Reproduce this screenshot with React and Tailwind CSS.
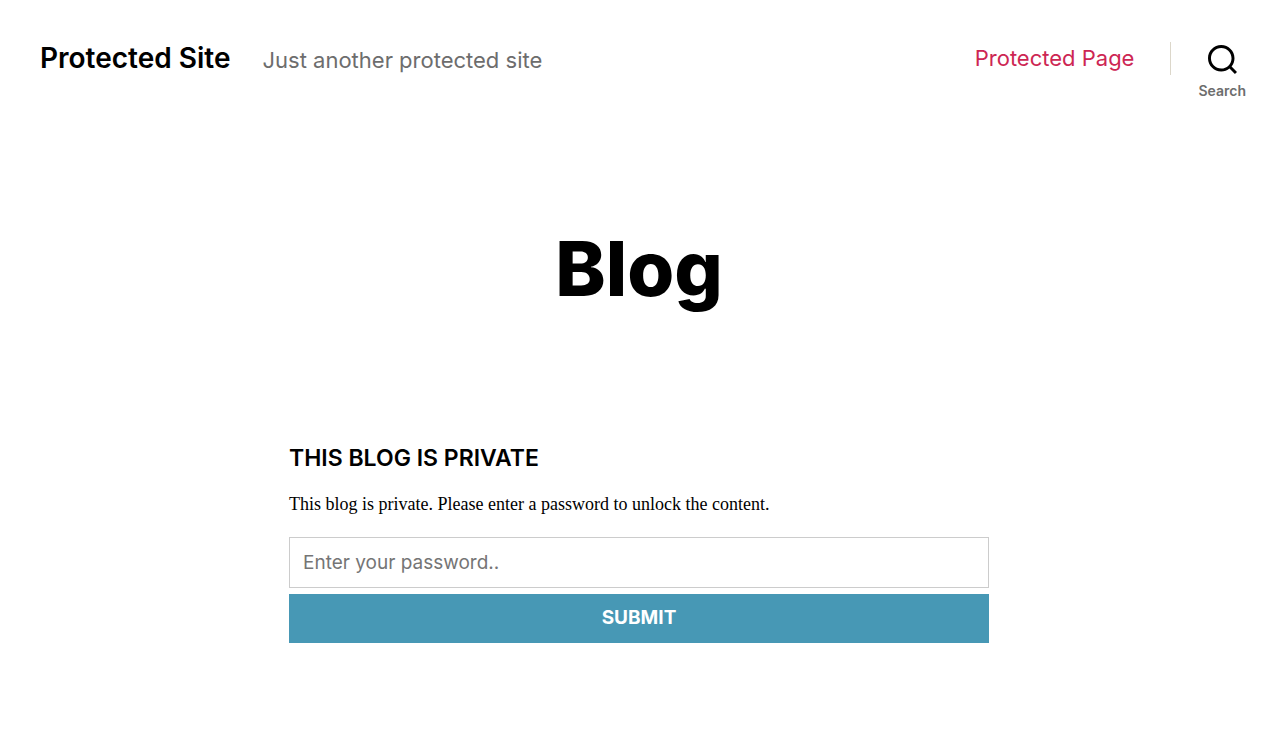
export default function App() {
  return (
    <div className="min-h-screen bg-white font-['Inter',sans-serif] text-black">
      <header className="flex items-start justify-between pt-10 pr-8 pl-10">
        <div className="flex items-baseline gap-x-8">
          <a href="#home" className="text-[28px] leading-9 font-semibold">
            Protected Site
          </a>
          <p className="text-[22px] leading-9 text-[#6d6d6d]">
            Just another protected site
          </p>
        </div>

        <div className="flex items-start">
          <nav aria-label="Main" className="flex">
            <a href="#protected" className="text-[22px] leading-9 text-[#cd2653]">
              Protected Page
            </a>
          </nav>
          <div className="mt-0.5 ml-9 h-[33px] border-l border-[#dcd7ca]" />
          <button type="button" className="mt-[5px] ml-[27px] flex flex-col items-center gap-[7px]">
            <svg viewBox="0 0 23 23" className="size-[29px]" fill="currentColor" aria-hidden="true">
              <path d="M38.710696,48.0601792 L43,52.3494831 L41.3494831,54 L37.0601792,49.710696 C35.2632422,51.1481185 32.9839107,52.0076499 30.5038249,52.0076499 C24.7027226,52.0076499 20,47.3049272 20,41.5038249 C20,35.7027226 24.7027226,31 30.5038249,31 C36.3049272,31 41.0076499,35.7027226 41.0076499,41.5038249 C41.0076499,43.9839107 40.1481185,46.2632422 38.710696,48.0601792 Z M36.3875844,47.1716785 C37.8030221,45.7026647 38.6734666,43.7048964 38.6734666,41.5038249 C38.6734666,36.9918565 35.0157934,33.3341833 30.5038249,33.3341833 C25.9918565,33.3341833 22.3341833,36.9918565 22.3341833,41.5038249 C22.3341833,46.0157934 25.9918565,49.6734666 30.5038249,49.6734666 C32.7048964,49.6734666 34.7026647,48.8030221 36.1716785,47.3875844 C36.2023931,47.347638 36.2360451,47.3092237 36.2726343,47.2726343 C36.3092237,47.2360451 36.347638,47.2023931 36.3875844,47.1716785 Z" transform="translate(-20 -31)" />
            </svg>
            <span className="text-sm leading-5 font-semibold text-[#6d6d6d]">Search</span>
          </button>
        </div>
      </header>

      <main>
        <h1 className="pt-[121px] text-center text-[76px] leading-[92px] font-extrabold">Blog</h1>

        <form className="mx-auto mt-32 w-full max-w-[700px]" onSubmit={(e) => e.preventDefault()}>
          <h2 className="text-[23px] leading-8 font-semibold uppercase">This blog is private</h2>
          <p className="mt-4 font-['Liberation_Serif',serif] text-lg leading-7">
            This blog is private. Please enter a password to unlock the content.
          </p>
          <input
            type="password"
            aria-label="Password"
            placeholder="Enter your password.."
            className="mt-[19px] block h-[51px] w-full border border-[#ccc] px-[13px] text-[19px] placeholder:text-[#757575]"
          />
          <button
            type="submit"
            className="mt-1.5 h-[49px] w-full bg-[#4798b5] text-[19px] font-bold text-white uppercase"
          >
            Submit
          </button>
        </form>
      </main>
    </div>
  );
}
